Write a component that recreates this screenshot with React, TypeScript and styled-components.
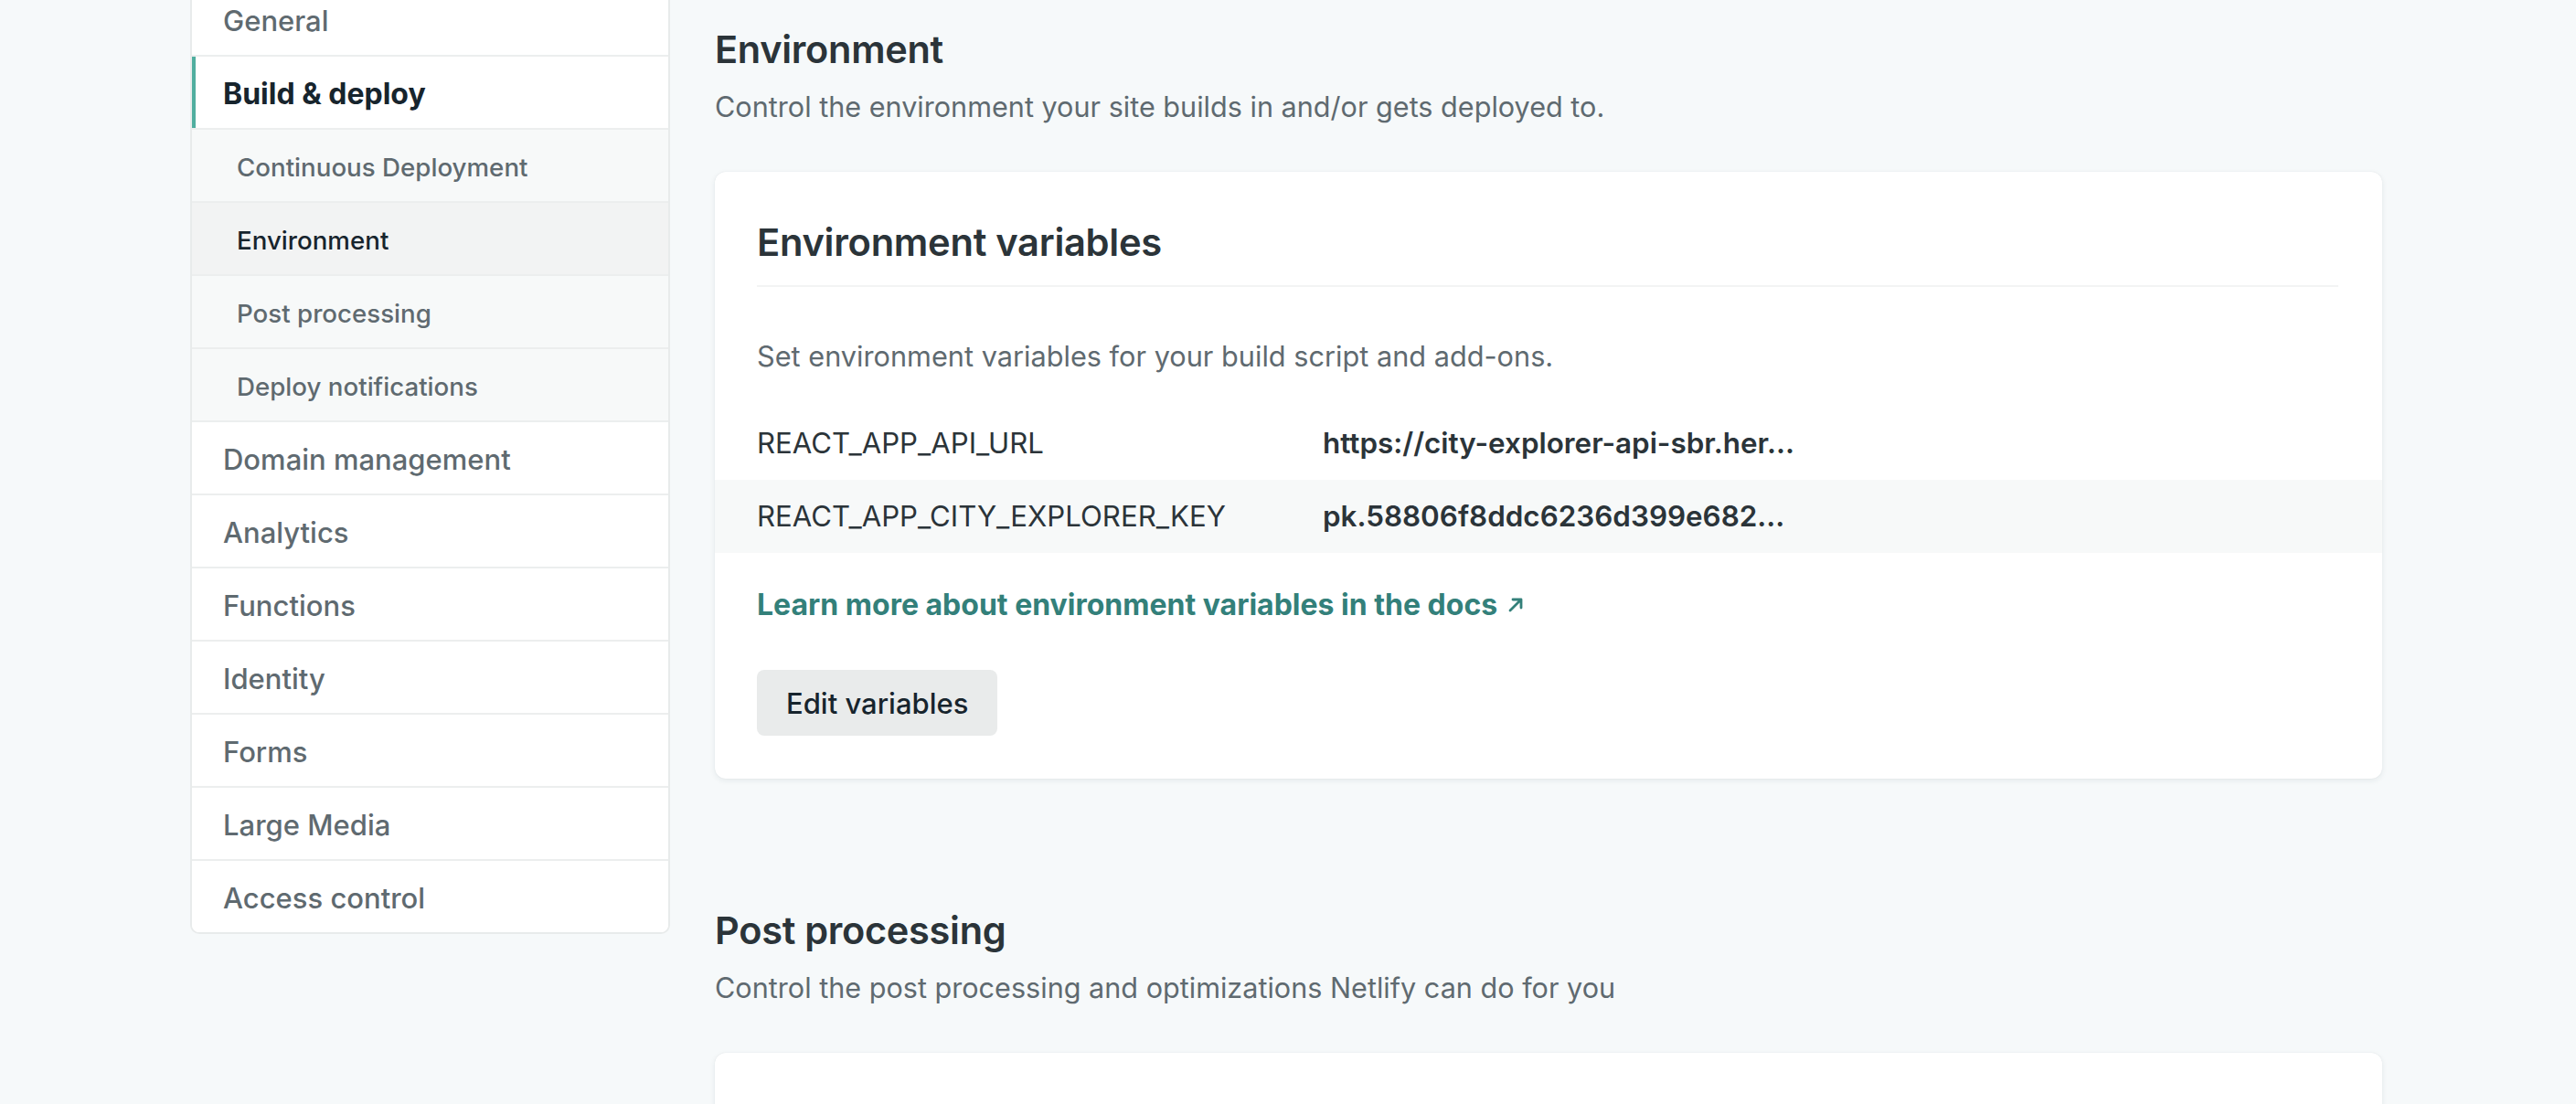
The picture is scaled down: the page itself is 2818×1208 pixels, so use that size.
import React from "react";
import styled, { createGlobalStyle } from "styled-components";

const GlobalStyle = createGlobalStyle`
  html, body {
    margin: 0;
    padding: 0;
    background: #f6f9fa;
    font-family: Inter, "Noto Sans", "Liberation Sans", sans-serif;
    color: #2b3439;
    overflow: hidden;
  }
`;

const Layout = styled.div`
  display: flex;
  align-items: flex-start;
  gap: 49px;
  padding-left: 208px;
  margin-top: -20px;
`;

const Sidebar = styled.nav`
  width: 525px;
  flex: none;
  box-sizing: border-box;
  background: #fff;
  border: 2px solid #e8ebeb;
  border-radius: 10px;
  overflow: hidden;
`;

const NavItem = styled.div<{ $sub?: boolean; $active?: boolean; $current?: boolean }>`
  position: relative;
  display: flex;
  align-items: center;
  height: 75px;
  padding-top: 3px;
  padding-left: ${(p) => (p.$sub ? "49px" : "34px")};
  border-bottom: 2px solid #eceeee;
  background: ${(p) => (p.$current ? "#f2f3f3" : p.$sub ? "#f7f9f9" : "#fff")};
  font-size: ${(p) => (p.$sub ? "27.7px" : p.$active ? "32px" : "31px")};
  font-weight: ${(p) => (p.$active ? 700 : 500)};
  color: ${(p) => (p.$active || p.$current ? "#17242d" : "#5f6a70")};
  &:last-child {
    border-bottom: none;
  }
  ${(p) =>
    p.$active &&
    `&::before {
      content: "";
      position: absolute;
      left: 0;
      top: 0;
      bottom: 0;
      width: 4px;
      background: #50ae9f;
    }`}
`;

const Main = styled.main`
  width: 1824px;
  flex: none;
  padding-top: 49px;
`;

const Section = styled.section`
  & + & {
    margin-top: 141px;
  }
`;

const SectionTitle = styled.h2`
  margin: 0;
  font-size: 41.5px;
  line-height: 50px;
  font-weight: 600;
  color: #2b3439;
  letter-spacing: -0.3px;
`;

const SectionLead = styled.p`
  margin: 16px 0 0;
  font-size: 30.6px;
  line-height: 44px;
  color: #5f6a70;
`;

const Card = styled.div<{ $stub?: boolean }>`
  margin-top: 49px;
  background: #fff;
  border-radius: 12px;
  box-shadow: 0 2px 6px rgba(30, 50, 60, 0.08), 0 0 1px rgba(30, 50, 60, 0.12);
  padding: 52px 48px 47px 46px;
  height: ${(p) => (p.$stub ? "300px" : "auto")};
`;

const CardTitle = styled.h3`
  margin: 0;
  font-size: 41.7px;
  line-height: 50px;
  font-weight: 600;
  color: #2b3439;
  letter-spacing: -0.3px;
  padding-bottom: 22px;
  border-bottom: 2px solid #f3f4f4;
`;

const CardText = styled.p`
  margin: 54px 0 0;
  font-size: 30.7px;
  line-height: 44px;
  color: #5f6a70;
`;

const VarList = styled.div`
  margin: 33px -48px 0 -46px;
`;

const VarRow = styled.div<{ $shaded?: boolean }>`
  display: grid;
  grid-template-columns: 619px 1fr;
  align-items: center;
  height: 80px;
  padding: 0 48px 0 46px;
  background: ${(p) => (p.$shaded ? "#f7f9f9" : "transparent")};
  font-size: 31.2px;
  color: #2b3439;
`;

const VarValue = styled.span`
  font-weight: 600;
  font-size: 31.4px;
`;

const DocsLink = styled.a`
  display: inline-flex;
  align-items: center;
  gap: 10px;
  margin-top: 35px;
  font-size: 32px;
  line-height: 44px;
  font-weight: 700;
  color: #33807a;
  text-decoration: none;
`;

const Actions = styled.div`
  margin-top: 49px;
`;

const Button = styled.button`
  height: 72px;
  padding: 0 32px;
  border: none;
  border-radius: 8px;
  background: #e9ebeb;
  font-family: inherit;
  font-size: 31px;
  font-weight: 500;
  color: #17242d;
`;

const ArrowIcon = () => (
  <svg width="20" height="20" viewBox="0 0 20 20" fill="none">
    <path d="M4 16L16 4M7 4H16V13" stroke="#33807a" strokeWidth="2.8" strokeLinecap="round" strokeLinejoin="round" />
  </svg>
);

const navTop = ["General"];
const navSub = ["Continuous Deployment", "Environment", "Post processing", "Deploy notifications"];
const navRest = ["Domain management", "Analytics", "Functions", "Identity", "Forms", "Large Media", "Access control"];

const vars = [
  { key: "REACT_APP_API_URL", value: "https://city-explorer-api-sbr.her..." },
  { key: "REACT_APP_CITY_EXPLORER_KEY", value: "pk.58806f8ddc6236d399e682..." },
];

export default function App() {
  return (
    <>
      <GlobalStyle />
      <Layout>
        <Sidebar>
          {navTop.map((n) => (
            <NavItem key={n}>{n}</NavItem>
          ))}
          <NavItem $active>Build &amp; deploy</NavItem>
          {navSub.map((n) => (
            <NavItem key={n} $sub $current={n === "Environment"}>
              {n}
            </NavItem>
          ))}
          {navRest.map((n) => (
            <NavItem key={n}>{n}</NavItem>
          ))}
        </Sidebar>

        <Main>
          <Section>
            <SectionTitle>Environment</SectionTitle>
            <SectionLead>Control the environment your site builds in and/or gets deployed to.</SectionLead>
            <Card>
              <CardTitle>Environment variables</CardTitle>
              <CardText>Set environment variables for your build script and add-ons.</CardText>
              <VarList>
                {vars.map((v, i) => (
                  <VarRow key={v.key} $shaded={i % 2 === 1}>
                    <span>{v.key}</span>
                    <VarValue>{v.value}</VarValue>
                  </VarRow>
                ))}
              </VarList>
              <DocsLink href="#">
                Learn more about environment variables in the docs
                <ArrowIcon />
              </DocsLink>
              <Actions>
                <Button>Edit variables</Button>
              </Actions>
            </Card>
          </Section>

          <Section>
            <SectionTitle>Post processing</SectionTitle>
            <SectionLead>Control the post processing and optimizations Netlify can do for you</SectionLead>
            <Card $stub />
          </Section>
        </Main>
      </Layout>
    </>
  );
}
